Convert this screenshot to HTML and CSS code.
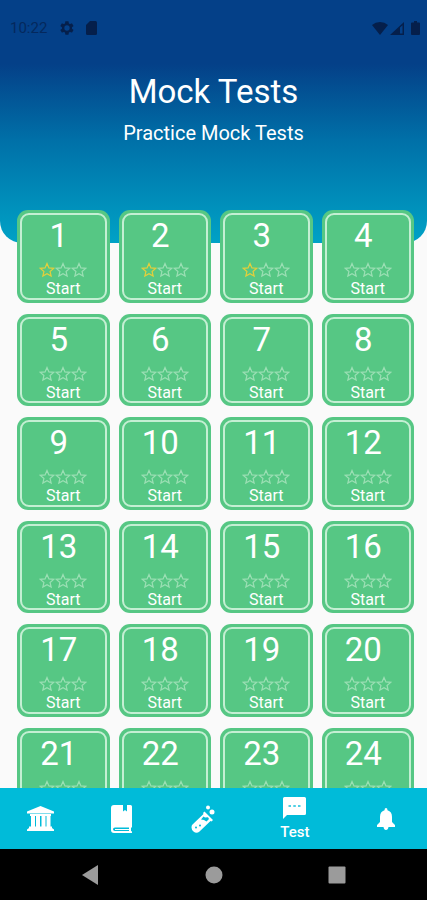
FILE: index.html
```html
<!DOCTYPE html>
<html lang="en">

<head>
    <meta charset="utf-8">
    <meta name="viewport" content="width=device-width, initial-scale=1">
    <title>Mock Tests</title>
    <link rel="stylesheet" href="styles.css">
</head>

<body>
    <svg class="defs" aria-hidden="true">
        <symbol id="star" viewBox="0 0 24 24">
            <path d="M12 2.2l2.9 6.6 7.1.7-5.4 4.7 1.6 7L12 17.500l-6.200 3.700 1.600-7L2 9.500l7.100-.7z" fill="none" stroke="currentColor" stroke-width="1.800"/>
        </symbol>
    </svg>

    <main class="screen">
        <header class="hero">
            <div class="status-bar">
                <span class="clock">10:22</span>
                <svg class="status-gear" width="16" height="16" viewBox="0 0 24 24"><path fill="currentColor" d="M19.4 13a7.500 7.500 0 0 0 0-2l2.100-1.600c.2-.2.300-.5.100-.7l-2-3.400c-.1-.2-.4-.3-.6-.2l-2.500 1a7.300 7.300 0 0 0-1.700-1l-.4-2.600c0-.3-.2-.5-.5-.5h-4c-.3 0-.5.200-.5.500L9 5.100a7.300 7.300 0 0 0-1.700 1l-2.500-1c-.2-.1-.5 0-.6.200l-2 3.400c-.1.200-.1.500.1.700L4.500 11a7.500 7.500 0 0 0 0 2l-2.200 1.600c-.2.200-.2.500-.1.700l2 3.400c.1.200.4.300.6.200l2.500-1c.5.400 1.100.7 1.700 1l.4 2.600c0 .3.200.5.500.5h4c.3 0 .5-.2.500-.5l.4-2.600a7.300 7.300 0 0 0 1.700-1l2.500 1c.2.100.5 0 .6-.2l2-3.400c.1-.2.100-.5-.1-.7zM12 16a4 4 0 1 1 0-8 4 4 0 0 1 0 8z"/></svg>
                <svg class="status-sd" width="11" height="14" viewBox="0 0 11 14"><path fill="currentColor" d="M4 0h5.500Q11 0 11 1.500v11Q11 14 9.500 14h-8Q0 14 0 12.500V4z"/></svg>
                <span class="status-right">
                    <svg width="16" height="13" viewBox="0 0 16 13"><path fill="currentColor" d="M8 13L0 3Q3.500 0 8 0t8 3z"/></svg>
                    <svg width="14" height="13" viewBox="0 0 14 13"><path fill="currentColor" d="M0 13L14 0v13zM10 5.500V11.500h2.500V3.200z" fill-rule="evenodd"/></svg>
                    <svg class="status-battery" width="9" height="14" viewBox="0 0 9 14"><path fill="currentColor" d="M3 0h3v1.500h2q1 0 1 1V13q0 1-1 1H1q-1 0-1-1V2.500q0-1 1-1h2z"/></svg>
                </span>
            </div>
            <h1>Mock Tests</h1>
            <p>Practice Mock Tests</p>
        </header>
        <div class="tests" id="tests"></div>
    </main>

    <nav class="tabs">
        <a href="#home" aria-label="Home">
            <svg width="27" height="26" viewBox="0 0 27 26"><path fill="currentColor" d="M13.500 0L27 5.500v2H0v-2zM3 8h21v2H3zM4 10h4v11H4zM9 10h4v11H9zM14.500 10h4v11h-4zM19.500 10h4v11h-4zM2 20.500h23v1.500l2 1.500V25H0v-1.500L2 22z"/></svg>
        </a>
        <a href="#books" aria-label="Books">
            <svg width="21" height="28" viewBox="0 0 21 28"><path fill="currentColor" d="M3 0h9v6.500l2-1.500 2 1.500V0h3.500Q21 0 21 1.500V22l-1 1v3l1 .5V28H3q-3 0-3-3V3q0-3 3-3zM4 22.500q-2 0-2 1.700T4 26h14v-1H4v-1h14v-1.500z" fill-rule="evenodd"/></svg>
        </a>
        <a href="#lab" aria-label="Lab">
            <svg width="24" height="28" viewBox="0 0 24 28">
                <path fill="currentColor" d="M12 8l1.500-1.500 8.500 8.500-1.500 1.500-1-.5L8.500 26.500Q5.500 29 2.500 26.500T1 20L12.500 9z"/>
                <path fill="#00bbd9" d="M12.500 11.500l1.500 1 3-.2 1 1.700-2.500 2.500-2.500-1.500-3-.5z"/>
                <circle cx="17" cy="2.500" r="2" fill="currentColor"/>
                <circle cx="21" cy="7" r="2.500" fill="currentColor"/>
                <circle cx="5" cy="22.500" r="1" fill="#00bbd9"/>
                <circle cx="9" cy="20.500" r="1" fill="#00bbd9"/>
            </svg>
        </a>
        <a href="#test" class="active" aria-current="page">
            <svg width="23" height="22" viewBox="0 0 23 22">
                <path fill="currentColor" d="M1.500 0h20Q23 0 23 1.500v15q0 1.500-1.500 1.500H4L0 22V1.500Q0 0 1.500 0z"/>
                <path fill="#4fcfe4" d="M5.500 8h2.500v2H5.500zM10.300 8h2.500v2h-2.500zM15 8h2.500v2H15z"/>
            </svg>
            <span>Test</span>
        </a>
        <a href="#alerts" aria-label="Notifications">
            <svg width="18" height="22" viewBox="0 0 18 22"><path fill="currentColor" d="M9 0q1.500 0 1.500 2.200Q15 3.500 15 9v5l3 3v2H0v-2l3-3V9q0-5.500 4.500-6.800Q7.500 0 9 0zM6.500 19h5Q11 22 9 22t-2.500-3z"/></svg>
        </a>
    </nav>

    <div class="system-nav">
        <button type="button" aria-label="Back"><svg width="18" height="20" viewBox="0 0 18 20"><path fill="currentColor" d="M0 10L16 0v20z"/></svg></button>
        <button type="button" aria-label="Home"><svg width="18" height="18" viewBox="0 0 18 18"><circle cx="9" cy="9" r="8.500" fill="currentColor"/></svg></button>
        <button type="button" aria-label="Recents"><svg width="18" height="18" viewBox="0 0 18 18"><rect width="17" height="17" x=".5" y=".5" rx="1" fill="currentColor"/></svg></button>
    </div>

<script>
(function() {
  var TOTAL = 24;
  // stars earned so far, by test number
  var earned = {1: 1, 2: 1, 3: 1};
  var html = '';

  for (var n = 1; n <= TOTAL; n++) {
    var stars = '';
    for (var s = 0; s < 3; s++) {
      var cls = s < (earned[n] || 0) ? 'star earned' : 'star';
      stars += '<svg class="' + cls + '"><use href="#star"/></svg>';
    }
    html += '<button type="button" class="test">' +
      '<span class="number">' + n + '</span>' +
      '<span class="stars">' + stars + '</span>' +
      '<span class="start">Start</span></button>';
  }

  document.getElementById('tests').innerHTML = html;
})();
</script>
</body>

</html>
```
FILE: styles.css
```css
* {
  box-sizing: border-box;
}
body {
  margin: 0;
  height: 100vh;
  display: flex;
  flex-direction: column;
  background: #fafafa;
  color: #fff;
  font-family: Roboto, sans-serif;
}
svg {
  display: block;
}
.defs {
  display: none;
}
button {
  border: none;
  padding: 0;
  font: inherit;
  color: inherit;
  background: none;
}
.screen {
  flex: 1;
  min-height: 0;
  overflow-y: auto;
  scrollbar-width: none;
}

/* header */
.hero {
  height: 243px;
  border-radius: 0 0 22px 22px;
  background: linear-gradient(#044088 64px, #0070a8 140px, #00a2c6);
  text-align: center;
}
.status-bar {
  display: flex;
  align-items: center;
  height: 56px;
  padding: 0 7px 0 10px;
  color: #051f4b;
}
.clock {
  font-size: 15px;
  opacity: 0.7;
}
.status-gear {
  margin-left: 12px;
}
.status-sd {
  margin-left: 11px;
}
.status-right {
  display: flex;
  align-items: center;
  gap: 2px;
  margin-left: auto;
}
.status-battery {
  margin-left: 5px;
}
.hero h1 {
  margin: 16px 0 0;
  font-size: 33px;
  font-weight: 400;
  line-height: 40px;
}
.hero p {
  margin: 9px 0 0;
  font-size: 20px;
  font-weight: 400;
  line-height: 24px;
}

/* test cards */
.tests {
  display: grid;
  grid-template-columns: repeat(4, 1fr);
  gap: 11px 9px;
  margin-top: -33px;
  padding: 0 13px 16px 17px;
}
.test {
  position: relative;
  display: flex;
  flex-direction: column;
  align-items: center;
  aspect-ratio: 1;
  padding-top: 6px;
  border-radius: 11px;
  background: #56c784;
}
.test::after {
  content: "";
  position: absolute;
  inset: 3px;
  border: 2px solid #c4efd3;
  border-radius: 9px;
}
.number {
  padding-right: 9px;
  font-size: 33px;
  line-height: 40px;
}
.stars {
  display: flex;
  margin-top: 6px;
}
.star {
  width: 16px;
  height: 16px;
  color: #9bdfb4;
}
.star.earned {
  color: #e3cf3c;
}
.start {
  font-size: 16px;
  line-height: 22px;
}

/* bottom tabs */
.tabs {
  display: flex;
  height: 61px;
  background: #00bbd9;
}
.tabs a {
  flex: 4;
  display: flex;
  flex-direction: column;
  align-items: center;
  justify-content: center;
  gap: 4px;
  color: #fff;
  text-decoration: none;
}
.tabs .active {
  flex: 5;
  font-size: 15px;
  font-weight: 500;
  line-height: 18px;
}
.system-nav {
  display: flex;
  justify-content: center;
  height: 51px;
  background: #000;
  color: #9b9b9b;
}
.system-nav button {
  display: flex;
  align-items: center;
  justify-content: center;
  width: 123px;
}
```
